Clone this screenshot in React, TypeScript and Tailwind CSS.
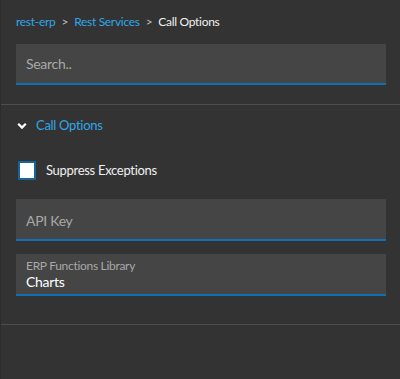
import React from "react";

export default function App() {
  return (
    <div
      className="w-[400px] h-[379px] bg-[#333333] border-l border-[#2c2c2c] flex flex-col tracking-[-0.3px]"
      style={{ fontFamily: "Lato, 'Noto Sans', sans-serif" }}
    >
      <div className="px-[15px] pt-[15px] pb-[19px]">
        <div className="flex items-center text-[12px] leading-[14px] h-[14px]">
          <span className="text-[#2fa6e6]">rest-erp</span>
          <span className="text-[#bdbdbd] mx-[6px]">&gt;</span>
          <span className="text-[#2fa6e6]">Rest Services</span>
          <span className="text-[#bdbdbd] mx-[6px]">&gt;</span>
          <span className="text-[#f0f0f0]">Call Options</span>
        </div>
        <div className="mt-[15px] h-[41px] bg-[#454545] border-b-[2px] border-[#1070b4] flex items-center px-[10px] mr-[-1px]">
          <span className="text-[14px] text-[#a8a8a8]">Search..</span>
        </div>
      </div>
      <div className="h-[1px] bg-[#4d4d4d]" />
      <div className="px-[15px] pt-[12px] pb-[28px]">
        <div className="flex items-center h-[18px]">
          <svg width="10" height="8" viewBox="0 0 10 8" className="ml-[1px]">
            <path d="M1.2 1.8 L5 5.6 L8.8 1.8" stroke="#ffffff" strokeWidth="2.2" fill="none" />
          </svg>
          <span className="ml-[9px] text-[13px] text-[#2fa6e6]">Call Options</span>
        </div>
        <div className="flex items-center mt-[26px] h-[19px]">
          <div className="w-[18px] h-[19px] ml-[2px] bg-white border-[2px] border-[#17639b] rounded-[1px]" />
          <span className="ml-[10px] text-[13px] text-[#f0f0f0]">Suppress Exceptions</span>
        </div>
        <div className="mt-[19px] h-[42px] bg-[#454545] border-b-[2px] border-[#1070b4] flex items-center px-[10px] mr-[-1px]">
          <span className="text-[14px] text-[#a8a8a8] mt-[2px]">API Key</span>
        </div>
        <div className="mt-[13px] h-[42px] bg-[#454545] border-b-[2px] border-[#1070b4] flex flex-col justify-center px-[10px] mr-[-1px]">
          <span className="text-[12px] leading-[14px] text-[#a8a8a8] mt-[1px]">ERP Functions Library</span>
          <span className="text-[14px] leading-[17px] text-[#ffffff]">Charts</span>
        </div>
      </div>
      <div className="h-[1px] bg-[#4d4d4d]" />
    </div>
  );
}
